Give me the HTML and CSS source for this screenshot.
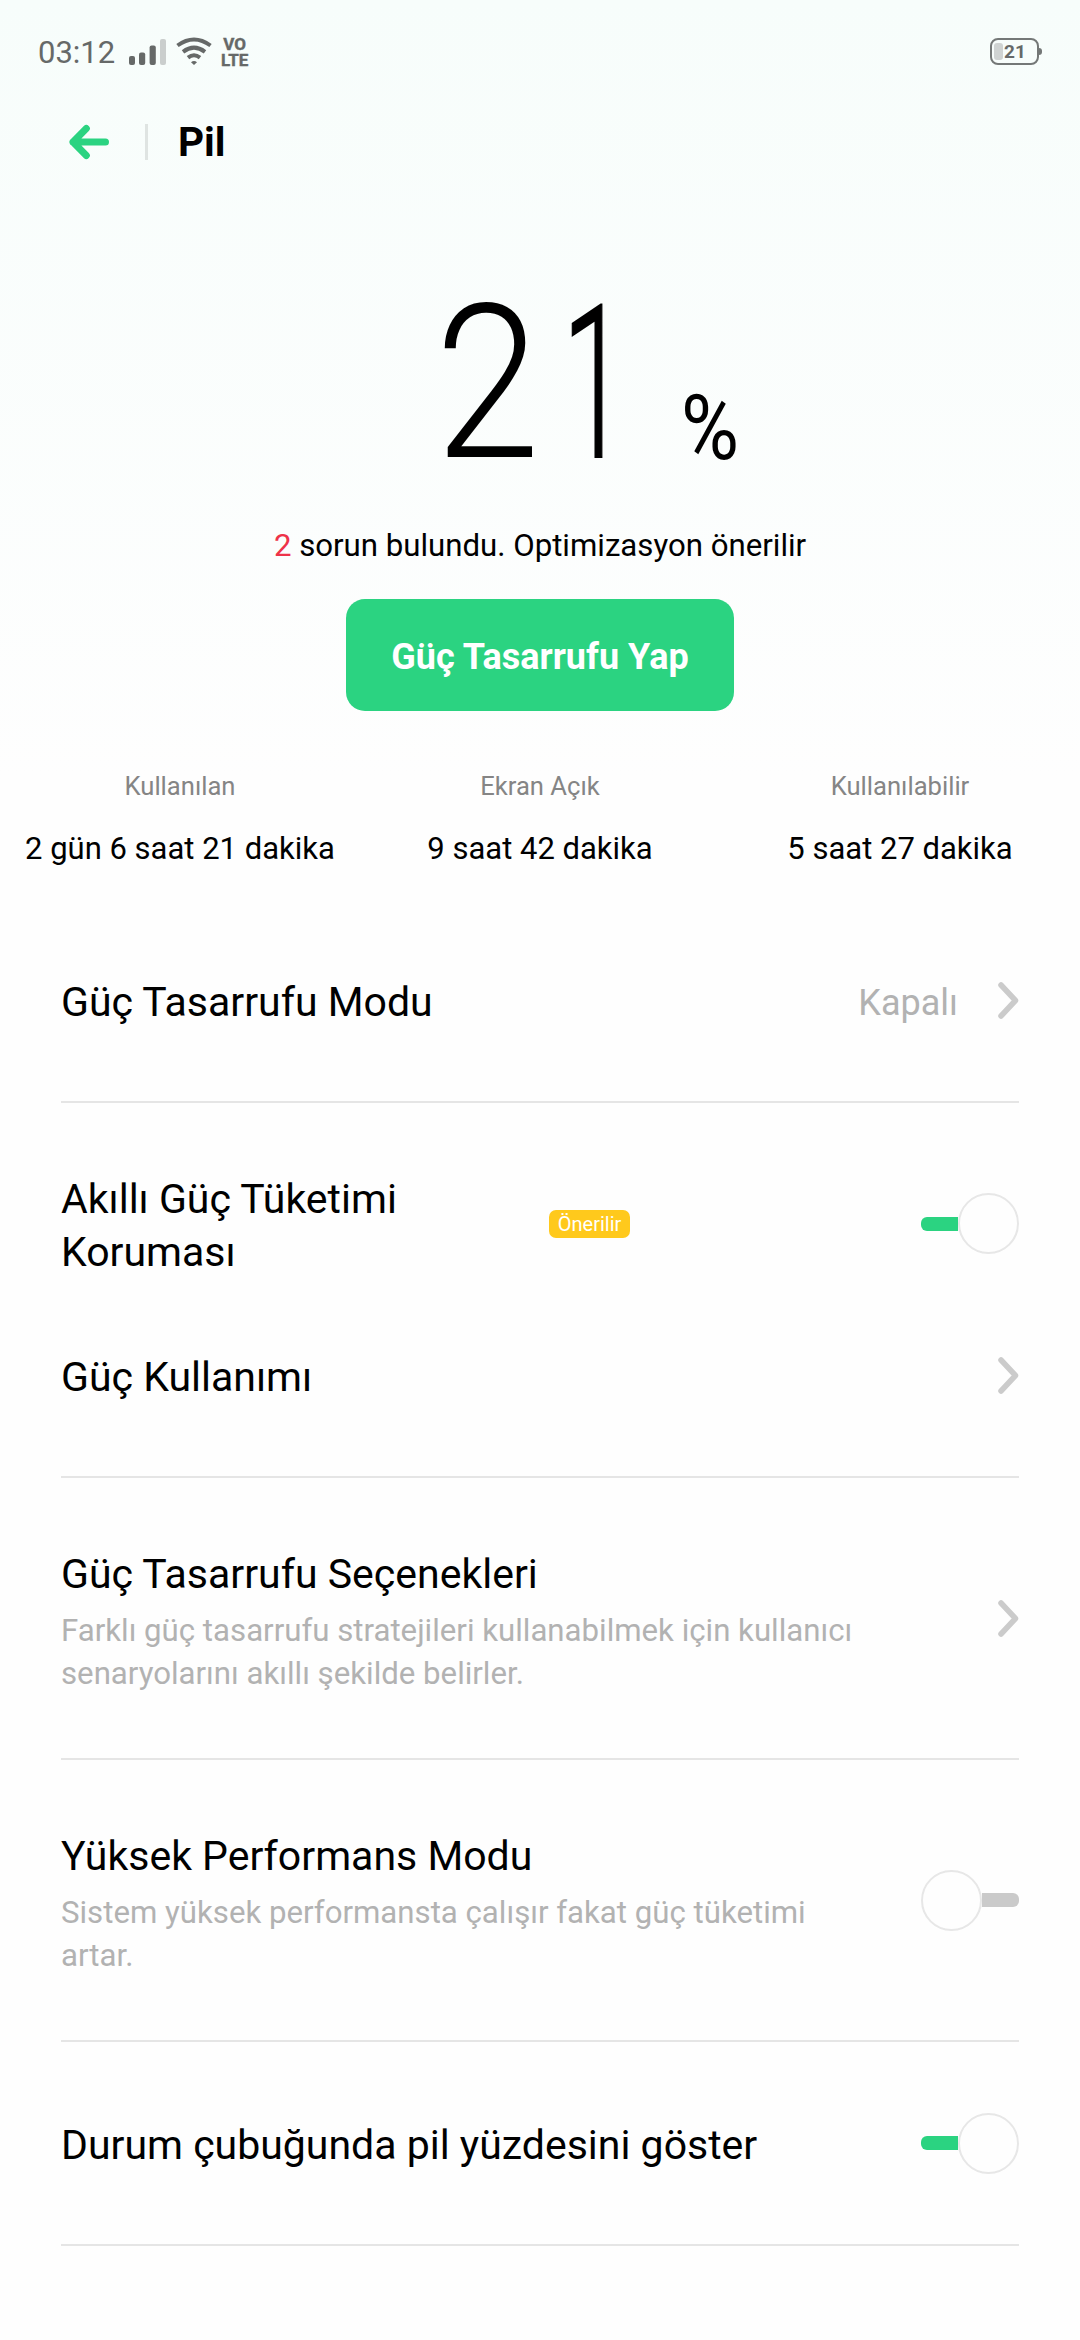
FILE: index.html
```html
<!DOCTYPE html>
<html lang="tr">
<head>
<meta charset="utf-8">
<title>Pil</title>
<link rel="stylesheet" href="styles.css">
</head>
<body>
<div class="screen">
  <div class="status">
    <span class="clock">03:12</span>
    <svg class="signal" width="38" height="27" viewBox="0 0 38 27">
      <g fill="#666968"><rect x="0" y="17" width="6" height="9" rx="2"/><rect x="10" y="13.500" width="6.200" height="12.500" rx="2"/><rect x="20.600" y="6.500" width="6.200" height="19.500" rx="2"/></g>
      <rect x="31" y="0" width="6" height="26" rx="2" fill="#cacecd"/>
    </svg>
    <svg class="wifi" width="36" height="29" viewBox="0 0 36 29" fill="none" stroke="#666968" stroke-width="4">
      <path d="M1.500 8.500Q18 -3.500 34.500 8.500"/>
      <path d="M7 14.800Q18 6.500 29 14.800"/>
      <path d="M12 20.600Q18 16 24 20.600"/>
      <path d="M15 25.200Q18 22.800 21 25.200L18 28Z" fill="#666968" stroke="none"/>
    </svg>
    <span class="volte"><span>VO</span><span>LTE</span></span>
    <span class="battery"><span class="level"></span>21</span>
    <span class="nub"></span>
  </div>
  <header class="header">
    <svg width="40" height="36" viewBox="0 0 40 36" fill="none" stroke="#2bd381" stroke-width="7" stroke-linecap="round" stroke-linejoin="round"><path d="M17.300 4.500L4 18L17.300 31.500M4 18H36.500"/></svg>
    <span class="bar"></span>
    <h1>Pil</h1>
  </header>
  <section class="hero">
    <div class="charge"><span class="two">2</span><span class="one">1</span><span class="pct">%</span></div>
    <p class="issues"><em>2</em> sorun bulundu. Optimizasyon önerilir</p>
    <button class="save">Güç Tasarrufu Yap</button>
    <div class="stats">
      <div><small>Kullanılan</small><b>2 gün 6 saat 21 dakika</b></div>
      <div><small>Ekran Açık</small><b>9 saat 42 dakika</b></div>
      <div><small>Kullanılabilir</small><b>5 saat 27 dakika</b></div>
    </div>
  </section>
  <main class="list">
    <section class="group mode">
      <div class="row"><h2>Güç Tasarrufu Modu</h2><span class="value">Kapalı</span>
        <svg class="chev" width="21" height="37" viewBox="0 0 21 37"><path d="M3 3L17.500 18.500L3 34"/></svg></div>
    </section>
    <section class="group usage">
      <div class="row smart"><h2>Akıllı Güç Tüketimi Koruması</h2><span class="badge">Önerilir</span><span class="toggle on"><i></i></span></div>
      <div class="row"><h2>Güç Kullanımı</h2>
        <svg class="chev" width="21" height="37" viewBox="0 0 21 37"><path d="M3 3L17.500 18.500L3 34"/></svg></div>
    </section>
    <section class="group tall">
      <div class="row"><div class="text"><h2>Güç Tasarrufu Seçenekleri</h2><p>Farklı güç tasarrufu stratejileri kullanabilmek için kullanıcı<br>senaryolarını akıllı şekilde belirler.</p></div>
        <svg class="chev" width="21" height="37" viewBox="0 0 21 37"><path d="M3 3L17.500 18.500L3 34"/></svg></div>
    </section>
    <section class="group tall">
      <div class="row"><div class="text"><h2>Yüksek Performans Modu</h2><p>Sistem yüksek performansta çalışır fakat güç tüketimi<br>artar.</p></div><span class="toggle"><i></i></span></div>
    </section>
    <section class="group percent">
      <div class="row"><h2>Durum çubuğunda pil yüzdesini göster</h2><span class="toggle on"><i></i></span></div>
    </section>
  </main>
</div>
</body>
</html>
```
FILE: styles.css
```css
* { box-sizing: border-box; margin: 0; padding: 0; }
body { font-family: Roboto, "Noto Sans", sans-serif; color: #000; background: #fefefe; }
.screen { width: 1080px; height: 2340px; overflow: hidden; background: linear-gradient(#f7fdfb 0, #fefefe 780px); }

.status { display: flex; align-items: flex-start; height: 104px; padding: 0 38px 0 38px; color: #666968; }
.clock { width: 91px; margin-top: 34px; font-size: 31px; line-height: 38px; white-space: nowrap; }
.signal { margin-top: 39px; }
.wifi { margin: 37px 0 0 9px; }
.volte { display: flex; flex-direction: column; margin: 36px 0 0 9px; font-size: 17px; font-weight: 700; line-height: 16px; align-items: center; -webkit-text-stroke: 0.4px #666968; }
.battery { display: flex; align-items: center; width: 49px; height: 27px; margin: 38px 0 0 auto; padding-left: 2px; border: 2.500px solid #747877; border-radius: 8px; font-size: 19px; font-weight: 700; line-height: 22px; }
.level { width: 9px; height: 17px; margin-right: 1px; border-radius: 3px; background: #cfd3d2; }
.nub { width: 3px; height: 7px; margin-top: 48px; border-radius: 0 3px 3px 0; background: #747877; }

.header { display: flex; align-items: center; height: 76px; padding: 0 69px; }
.header .bar { width: 3px; height: 36px; margin: 0 30px 0 36px; background: #dfe4e2; }
.header h1 { font-size: 40.5px; font-weight: 700; line-height: 48px; }

.hero { display: flex; flex-direction: column; align-items: center; height: 720px; }
.charge { display: flex; align-self: stretch; height: 341px; padding-left: 435px; font-weight: 300; }
.charge span { transform-origin: 0 0; line-height: 260px; white-space: nowrap; }
.two { width: 127px; margin-top: 74px; font-size: 215px; transform: scaleX(.88); }
.one { width: 119px; margin-top: 74px; font-size: 214px; -webkit-text-stroke: 2px #000; transform: scaleX(.55); }
.pct { margin-top: 119px; font-size: 90px; font-weight: 400; transform: scaleX(.88); }
.issues { height: 78px; font-size: 31.2px; line-height: 50px; }
.issues em { font-style: normal; color: #ee3349; }
.save { width: 388px; height: 112px; padding-top: 3px; border: 0; border-radius: 19px; background: #2bd381; color: #fff; font: 700 36px/42px Roboto, sans-serif; }
.stats { display: grid; grid-template-columns: repeat(3, 360px); margin-top: 59px; text-align: center; white-space: nowrap; }
.stats div { display: flex; flex-direction: column; }
.stats small { font-size: 25.6px; line-height: 32px; color: #858585; }
.stats b { margin-top: 27px; font-size: 31px; font-weight: 400; line-height: 40px; }

.list { padding: 0 61px; }
.group { border-bottom: 2px solid #e5e5e5; }
.row { display: flex; align-items: center; height: 201px; }
h2 { padding-top: 3px; font-size: 41px; font-weight: 400; line-height: 53px; }
.value { margin: 4px 40px 0 auto; font-size: 36px; color: #b2b2b2; }
.chev { flex: none; margin-left: auto; fill: none; stroke: #cbcbcb; stroke-width: 5.500px; stroke-linecap: round; stroke-linejoin: round; }
.value + .chev { margin-left: 0; }
.usage { height: 375px; padding-top: 67px; }
.usage .row { height: 197px; }
.usage .smart { height: 107px; }
.smart h2 { width: 488px; padding-top: 4px; padding-right: 100px; }
.badge { width: 81px; height: 28px; border-radius: 7px; background: #ffc91c; color: #fff; font-size: 20px; line-height: 29px; text-align: center; }
.toggle { flex: none; display: flex; align-items: center; width: 98px; height: 62px; margin-left: auto; }
.toggle::after { content: ""; width: 37px; height: 14px; border-radius: 0 6px 6px 0; background: #cacaca; }
.toggle i { width: 61px; height: 61px; border: 2px solid #e7e7e7; border-radius: 50%; background: #fefefe; }
.toggle.on { flex-direction: row-reverse; }
.toggle.on::after { border-radius: 6px 0 0 6px; background: #2bd381; }
.tall .row { height: 280px; }
.text { padding-top: 5px; }
.text p { margin-top: 10px; font-size: 31.2px; line-height: 43px; color: #b2b2b2; white-space: nowrap; }
.text h2 { line-height: 50px; }
.percent .row { height: 202px; }
.percent h2 { padding-top: 5px; }
```
